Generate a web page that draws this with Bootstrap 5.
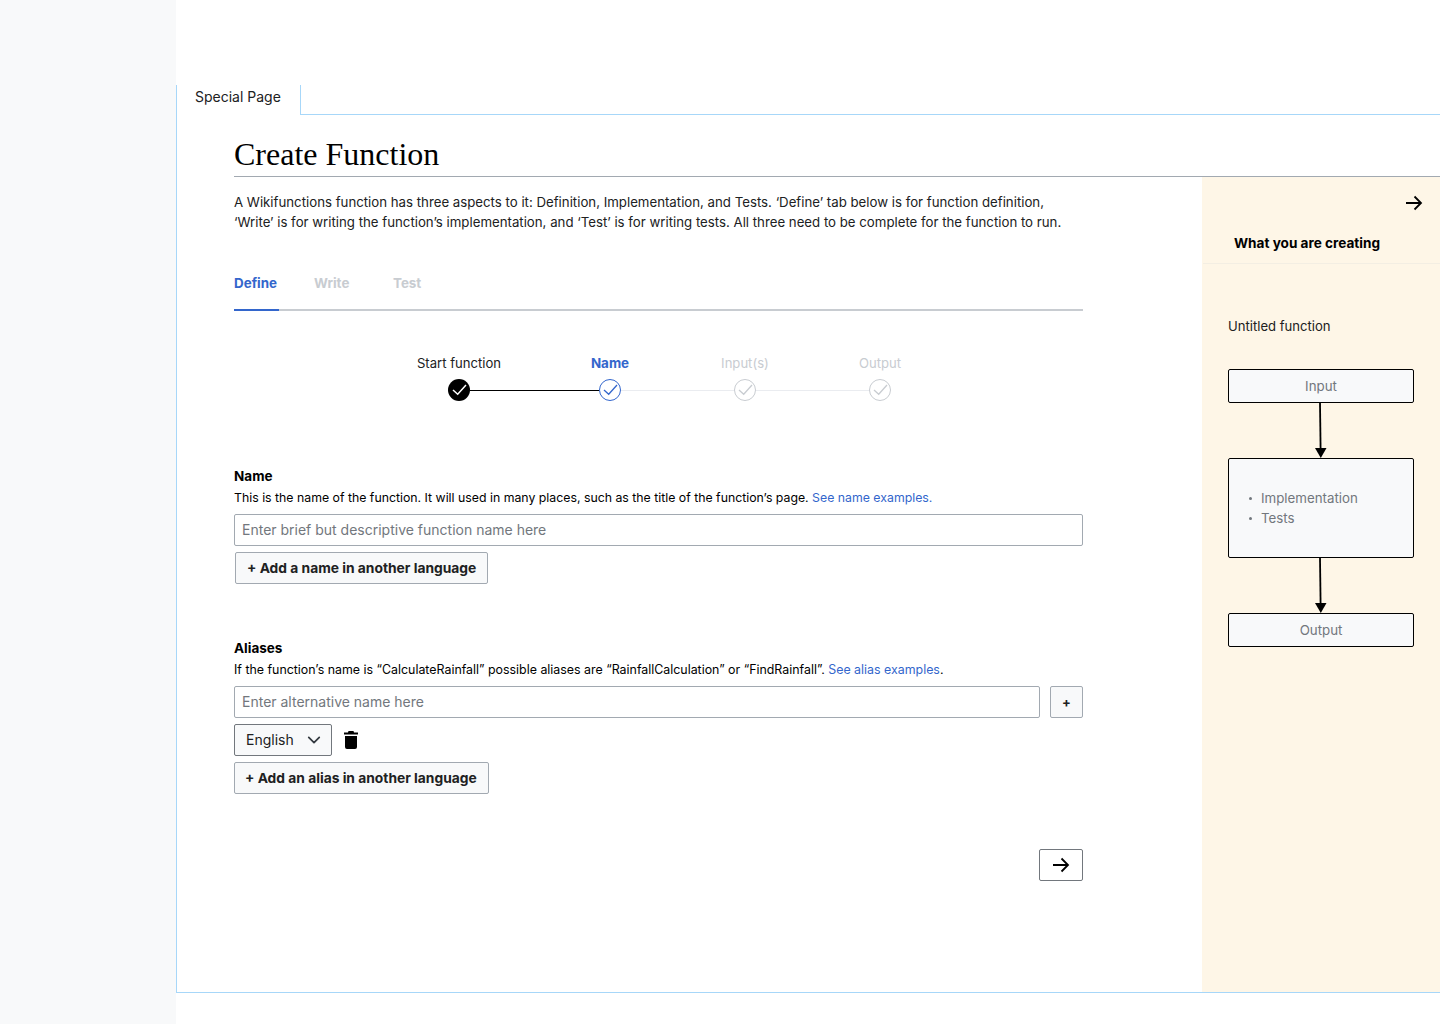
<!DOCTYPE html>
<html lang="en">
<head>
  <meta charset="UTF-8" />
  <title>Create Function</title>
  <meta name="viewport" content="width=device-width, initial-scale=1" />
  <link href="https://cdn.jsdelivr.net/npm/bootstrap@5.3.0/dist/css/bootstrap.min.css" rel="stylesheet">
  <style>
    body { height: 1024px; overflow: hidden; font-family: Inter, "Liberation Sans", sans-serif; font-size: 14px; line-height: 20px; color: #202122; }
    a { color: #36c; text-decoration: none; }
    .side-rail { width: 176px; background: #f8f9fa; }
    .page-frame { margin-top: 85px; height: 908px; border-left: 1px solid #a7d7f9; border-bottom: 1px solid #a7d7f9; }
    .page-tab { height: 30px; }
    .page-tab-label { width: 124px; height: 30px; padding: 2px 0 0 18px; line-height: 20px; border-right: 1px solid #a7d7f9; }
    .page-tab-fill { border-bottom: 1px solid #a7d7f9; }
    .page-title { margin: 0 0 0 57px; height: 62px; padding-top: 20px; border-bottom: 1px solid #a2a9b1; font-family: "Liberation Serif", serif; font-size: 32px; line-height: 38px; font-weight: 400; color: #000; }
    .work-area { width: 849px; margin-left: 57px; padding-top: 15px; }
    .intro-text { margin: 0; font-size: 13.24px; color: #202122; }
    .step-tabs { margin-top: 41px; height: 38px; border-bottom: 2px solid #c8ccd1; }
    .step-tabs .nav-link { padding: 0; height: 38px; font-size: 13.4px; font-weight: 700; color: #c8ccd1; line-height: 20px; }
    .step-tabs .nav-link.active { width: 45px; color: #36c; border-bottom: 2px solid #36c; }
    .tab-write { margin-left: 35px; width: 44px; }
    .tab-test { margin-left: 35px; }
    .stepper { margin-top: 42px; }
    .step-labels { margin-left: 141.5px; font-size: 13.1px; }
    .step-label { width: 135px; text-align: center; color: #c8ccd1; }
    .step-label.first { width: 167px; color: #202122; }
    .step-label.current { color: #36c; font-size: 13.4px; font-weight: 700; }
    .step-track { margin: 6px 0 0 214px; }
    .step-dot { width: 22px; height: 22px; display: block; flex: none; }
    .step-line { height: 1px; background: #eaecf0; }
    .step-line.done { background: #000; }
    .step-line.long { width: 129px; }
    .step-line.short { width: 113px; }
    .field-title { font-size: 13.5px; font-weight: 700; color: #000; margin: 0; }
    .field-help { font-size: 12.3px; line-height: 20px; color: #000; margin: 2px 0 6px; }
    .alias-block .field-help { font-size: 12.4px; }
    .name-block { margin-top: 65px; }
    .alias-block { margin-top: 54px; }
    .form-control.plain-input { height: 32px; padding: 0 7px 2px; font-size: 14px; border: 1px solid #a2a9b1; border-radius: 2px; color: #202122; }
    .plain-input::placeholder { color: #72777d; opacity: 1; }
    .btn.wiki-btn { height: 32px; padding: 0 11px; font-size: 13.8px; line-height: 30px; font-weight: 700; color: #202122; background: #f8f9fa; border: 1px solid #a2a9b1; border-radius: 2px; }
    .name-add { margin: 6px 0 0 1px; }
    .alias-plus { width: 33px; padding: 0 !important; flex: none; margin-left: 10px; font-size: 13px !important; }
    .lang-row { margin-top: 6px; }
    .form-select.lang-select { width: 98px; height: 32px; padding: 0 30px 0 11px; font-size: 14px; line-height: 30px; color: #202122; background-color: #f8f9fa; background-position: right 10px center; background-size: 14px 14px; border: 1px solid #72777d; border-radius: 2px; }
    .trash-icon { margin-left: 12px; }
    .btn.wiki-btn.alias-add { margin-top: 6px; padding-left: 10px; }
    .next-btn { width: 44px; height: 32px; padding: 0; margin-top: 55px; border: 1px solid #72777d; border-radius: 2px; background: #fff; }
    .summary-panel { width: 238px; height: 815px; flex: none; background: #fef6e7; margin-left: 119px; }
    .summary-head { height: 87px; padding: 56px 0 0 31px; font-size: 13.6px; font-weight: 700; color: #000; border-bottom: 1px solid #f3eee3; margin-left: 1px; }
    .summary-close { position: absolute; top: 18px; right: 17px; line-height: 0; }
    .summary-body { padding: 52px 0 0 26px; width: 212px; }
    .untitled-name { font-size: 13.1px; margin-bottom: 33px; }
    .flow-box { width: 186px; background: #f8f9fa; border: 1px solid #000; border-radius: 2px; text-align: center; font-size: 13.3px; color: #72777d; line-height: 32px; }
    .flow-list { height: 100px; text-align: left; padding: 29px 0 0 20px; line-height: 20px; }
    .flow-list ul { margin: 0; padding: 0; list-style: none; }
    .flow-list li { display: flex; align-items: center; }
    .flow-list li::before { content: ""; width: 3px; height: 3px; border-radius: 50%; background: #72777d; margin-right: 9px; }
    .flow-arrow { display: block; width: 186px; height: 55px; }
  </style>
</head>
<body>
  <div class="d-flex h-100">
    <div class="side-rail flex-shrink-0"></div>

    <main class="flex-grow-1">
      <div class="page-frame">
        <div class="page-tab d-flex">
          <div class="page-tab-label">Special Page</div>
          <div class="page-tab-fill flex-grow-1"></div>
        </div>

        <h1 class="page-title">Create Function</h1>

        <div class="d-flex">
          <div class="work-area flex-shrink-0">
            <p class="intro-text">A Wikifunctions function has three aspects to it: Definition, Implementation, and Tests. ‘Define’ tab below is for function definition,<br>‘Write’ is for writing the function’s implementation, and ‘Test’ is for writing tests. All three need to be complete for the function to run.</p>

            <nav class="nav step-tabs">
              <a class="nav-link active" href="#">Define</a>
              <a class="nav-link tab-write" href="#">Write</a>
              <a class="nav-link tab-test" href="#">Test</a>
            </nav>

            <div class="stepper">
              <div class="step-labels d-flex">
                <div class="step-label first">Start function</div>
                <div class="step-label current">Name</div>
                <div class="step-label">Input(s)</div>
                <div class="step-label">Output</div>
              </div>
              <div class="step-track d-flex align-items-center">
                <svg class="step-dot" viewBox="0 0 22 22"><circle cx="11" cy="11" r="11" fill="#000"/><path d="M5 11l4.700 4.300L18 6" fill="none" stroke="#fff" stroke-width="1.500"/></svg>
                <div class="step-line done long"></div>
                <svg class="step-dot" viewBox="0 0 22 22"><circle cx="11" cy="11" r="10.500" fill="#fff" stroke="#36c"/><path d="M5 11l4.700 4.300L18 6" fill="none" stroke="#36c" stroke-width="1.300"/></svg>
                <div class="step-line short"></div>
                <svg class="step-dot" viewBox="0 0 22 22"><circle cx="11" cy="11" r="10.500" fill="#fff" stroke="#c8ccd1"/><path d="M5 11l4.700 4.300L18 6" fill="none" stroke="#c8ccd1" stroke-width="1.300"/></svg>
                <div class="step-line short"></div>
                <svg class="step-dot" viewBox="0 0 22 22"><circle cx="11" cy="11" r="10.500" fill="#fff" stroke="#c8ccd1"/><path d="M5 11l4.700 4.300L18 6" fill="none" stroke="#c8ccd1" stroke-width="1.300"/></svg>
              </div>
            </div>

            <section class="name-block">
              <p class="field-title">Name</p>
              <p class="field-help">This is the name of the function. It will used in many places, such as the title of the function’s page. <a href="#">See name examples.</a></p>
              <input class="form-control plain-input" type="text" placeholder="Enter brief but descriptive function name here">
              <button class="btn wiki-btn name-add" type="button">+ Add a name in another language</button>
            </section>

            <section class="alias-block">
              <p class="field-title">Aliases</p>
              <p class="field-help">If the function’s name is “CalculateRainfall” possible aliases are “RainfallCalculation” or “FindRainfall”. <a href="#">See alias examples</a>.</p>
              <div class="d-flex">
                <input class="form-control plain-input" type="text" placeholder="Enter alternative name here">
                <button class="btn wiki-btn alias-plus" type="button">+</button>
              </div>
              <div class="d-flex align-items-center lang-row">
                <select class="form-select lang-select"><option>English</option></select>
                <svg class="trash-icon" width="14" height="18" viewBox="0 0 14 18"><path d="M4.500 0h5l.5 1.500h4V3.500H0V1.500h4zM1 5h12v11a2 2 0 0 1-2 2H3a2 2 0 0 1-2-2z" fill="#000"/></svg>
              </div>
              <button class="btn wiki-btn alias-add" type="button">+ Add an alias in another language</button>
            </section>

            <div class="d-flex justify-content-end">
              <button class="next-btn d-flex align-items-center justify-content-center" type="button" aria-label="Next">
                <svg width="18" height="16" viewBox="0 0 18 16"><path d="M1 8h15M9.500 1.500L16 8l-6.500 6.500" fill="none" stroke="#000" stroke-width="1.800"/></svg>
              </button>
            </div>
          </div>

          <aside class="summary-panel position-relative">
            <div class="summary-close">
              <svg width="18" height="16" viewBox="0 0 18 16"><path d="M1 8h15M9.500 1.500L16 8l-6.500 6.500" fill="none" stroke="#000" stroke-width="1.800"/></svg>
            </div>
            <div class="summary-head">What you are creating</div>
            <div class="summary-body">
              <div class="untitled-name">Untitled function</div>
              <div class="flow-box">Input</div>
              <svg class="flow-arrow" viewBox="0 0 186 55"><path d="M92 0l.6 46" stroke="#000" stroke-width="1.800" fill="none"/><path d="M87 45h11.500l-5.700 10z" fill="#000"/></svg>
              <div class="flow-box flow-list">
                <ul>
                  <li>Implementation</li>
                  <li>Tests</li>
                </ul>
              </div>
              <svg class="flow-arrow" viewBox="0 0 186 55"><path d="M92 0l.6 46" stroke="#000" stroke-width="1.800" fill="none"/><path d="M87 45h11.500l-5.700 10z" fill="#000"/></svg>
              <div class="flow-box">Output</div>
            </div>
          </aside>
        </div>
      </div>
    </main>
  </div>
</body>
</html>
